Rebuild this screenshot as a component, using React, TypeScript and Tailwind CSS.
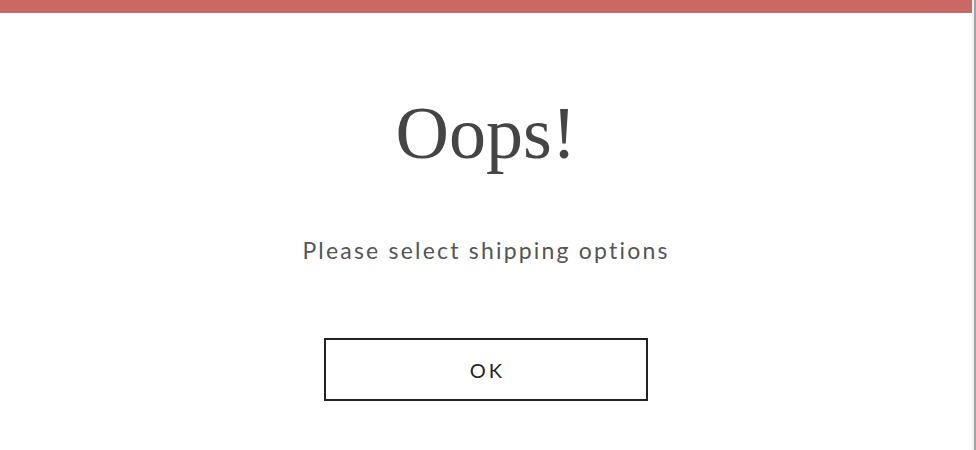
export default function App() {
  return (
    <div className="flex h-[450px] w-[976px] bg-white">
      <div className="flex flex-1 flex-col items-center">
        {/* top accent bar */}
        <div className="h-[13px] w-full bg-[#cb6764]" />

        <h1 className="mt-[83px] text-[74px] leading-none text-[#454545] font-['Liberation_Serif',serif]">
          Oops!
        </h1>

        <p className="mt-[69px] text-[23px] leading-none tracking-[2.2px] text-[#555555] font-['Lato',sans-serif]">
          Please select shipping options
        </p>

        <button className="mt-[76px] flex h-[63px] w-[324px] items-center justify-center border-2 border-[#222222] pl-[3px] text-[20px] tracking-[3px] text-[#222222] font-['Lato',sans-serif]">
          OK
        </button>
      </div>
      <div className="w-[2px] bg-[#f1f1f1]" />
      <div className="w-[2px] bg-[#a3a3a3]" />
    </div>
  );
}
